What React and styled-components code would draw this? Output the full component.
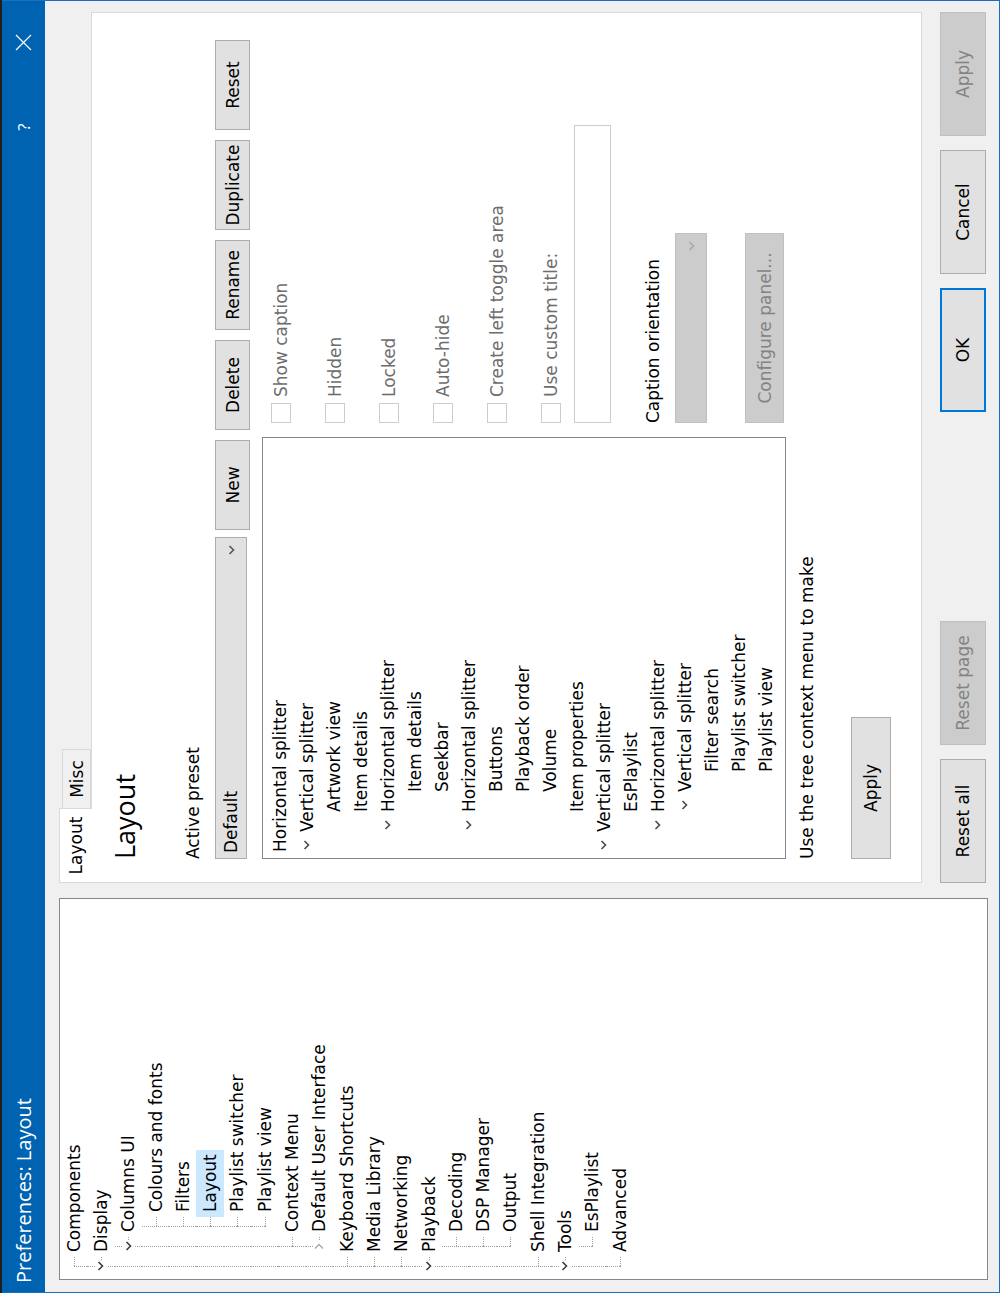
import React from "react";
import styled, { createGlobalStyle } from "styled-components";

// the dialog is drawn upright (1293 x 1000) and then turned a quarter
// anticlockwise, the way the screenshot shows it

const GlobalStyle = createGlobalStyle`
  html, body {
    margin: 0;
    padding: 0;
    background: #1f1f1f;
    overflow: hidden;
  }
  #root {
    width: 1000px;
    height: 1293px;
    overflow: hidden;
  }
  * {
    box-sizing: border-box;
  }
`;

const UI_FONT = `"DejaVu Sans", Verdana, sans-serif`;
const TITLE_FONT = `"Open Sans", "Noto Sans", sans-serif`;

const Stage = styled.div`
  width: 1293px;
  height: 1000px;
  padding-top: 2px;
  display: flex;
  transform-origin: 0 0;
  transform: translateY(1293px) rotate(-90deg);
`;

const Window = styled.div`
  flex: 1;
  display: flex;
  flex-direction: column;
  background: #f0f0f0;
  border: 1px solid #1a6fc0;
  border-top: none;
  font-family: ${UI_FONT};
  font-size: 17px;
  color: #000;
`;

const TitleBar = styled.div`
  height: 43px;
  flex: none;
  display: flex;
  align-items: center;
  background: #0063b1;
  color: #fff;
  padding-left: 9px;
  padding-right: 19px;
`;

const Title = styled.div`
  font-family: ${TITLE_FONT};
  font-size: 20px;
  flex: 1;
`;

const CaptionButton = styled.div`
  width: 46px;
  height: 100%;
  display: flex;
  align-items: center;
  justify-content: center;
  margin-left: ${(p) => p.$gap || 0}px;
  font-family: ${TITLE_FONT};
  font-size: 17px;
`;

const Body = styled.div`
  flex: 1;
  display: flex;
  gap: 15px;
  padding: 14px 11px 11px 12px;
  min-height: 0;
`;

/* ---------- left navigation tree ---------- */

const NavTree = styled.div`
  width: 382px;
  flex: none;
  background: #fff;
  border: 1px solid #828790;
  padding: 0 0 0 2px;
  overflow: hidden;
`;

const NavRow = styled.div`
  height: 27.3px;
  display: flex;
  align-items: stretch;
  white-space: nowrap;
`;

const Guide = styled.span`
  width: 20px;
  flex: none;
  position: relative;
  &::before {
    content: "";
    display: ${(p) => (p.$on ? "block" : "none")};
    position: absolute;
    left: 10px;
    top: 0;
    bottom: 0;
    border-left: 1px dotted #a0a0a0;
  }
`;

const Joint = styled.span`
  width: 20px;
  flex: none;
  position: relative;
  display: flex;
  align-items: center;
  justify-content: center;
  &::before {
    content: "";
    position: absolute;
    left: 10px;
    top: ${(p) => (p.$first ? "50%" : "0")};
    bottom: ${(p) => (p.$last ? "50%" : "0")};
    border-left: 1px dotted #a0a0a0;
  }
  &::after {
    content: "";
    position: absolute;
    left: 10px;
    right: 0;
    top: 50%;
    border-top: 1px dotted #a0a0a0;
  }
`;

const Expander = styled.span`
  position: relative;
  z-index: 1;
  width: 12px;
  height: 12px;
  background: #fff;
  display: flex;
  align-items: center;
  justify-content: center;
  margin-left: 1px;
`;

const NavLabel = styled.span`
  display: flex;
  align-items: center;
  padding: 0 4px 0 5px;
  background: ${(p) => (p.$selected ? "#cce8ff" : "transparent")};
`;

/* ---------- right side ---------- */

const RightColumn = styled.div`
  flex: 1;
  display: flex;
  flex-direction: column;
  min-width: 0;
`;

const Tabs = styled.div`
  height: 32px;
  flex: none;
  display: flex;
  align-items: flex-end;
`;

const Tab = styled.div`
  position: relative;
  z-index: ${(p) => (p.$active ? 1 : 0)};
  width: ${(p) => p.$w}px;
  height: ${(p) => (p.$active ? 33 : 29)}px;
  margin-bottom: ${(p) => (p.$active ? -1 : 0)}px;
  background: ${(p) => (p.$active ? "#fff" : "#f0f0f0")};
  border: 1px solid #d9d9d9;
  border-bottom: ${(p) => (p.$active ? "none" : "1px solid #d9d9d9")};
  border-left: ${(p) => (p.$active ? "1px solid #d9d9d9" : "none")};
  display: flex;
  align-items: center;
  justify-content: center;
`;

const Page = styled.div`
  flex: 1;
  background: #fff;
  border: 1px solid #d9d9d9;
  padding: 15px 0 0 23px;
  display: flex;
  flex-direction: column;
  align-items: flex-start;
`;

const Heading = styled.div`
  font-family: ${TITLE_FONT};
  font-size: 27px;
  line-height: 36px;
`;

const Label = styled.div`
  line-height: 20px;
  margin-top: ${(p) => p.$mt || 0}px;
  color: ${(p) => (p.$muted ? "#6d6d6d" : "#000")};
  white-space: nowrap;
`;

const PresetRow = styled.div`
  display: flex;
  align-items: flex-start;
  margin-top: 12px;
`;

const Combo = styled.div`
  width: ${(p) => p.$w}px;
  height: 32px;
  margin-top: ${(p) => p.$mt || 0}px;
  display: flex;
  align-items: center;
  justify-content: space-between;
  padding: 0 7px 0 5px;
  background: ${(p) => (p.$disabled ? "#cccccc" : "#e1e1e1")};
  border: 1px solid ${(p) => (p.$disabled ? "#bfbfbf" : "#adadad")};
`;

const ButtonGroup = styled.div`
  display: flex;
  gap: 10px;
  margin-left: 7px;
`;

const Button = styled.div`
  width: ${(p) => p.$w}px;
  height: ${(p) => p.$h}px;
  margin-top: ${(p) => p.$mt || 0}px;
  flex: none;
  display: flex;
  align-items: center;
  justify-content: center;
  white-space: nowrap;
  background: ${(p) => (p.$disabled ? "#cccccc" : "#e1e1e1")};
  color: ${(p) => (p.$disabled ? "#838383" : "#000")};
  border: ${(p) =>
    p.$focus
      ? "2px solid #0078d7"
      : `1px solid ${p.$disabled ? "#bfbfbf" : "#adadad"}`};
`;

const MainRow = styled.div`
  display: flex;
  align-items: flex-start;
  gap: 14px;
  margin-top: 12px;
`;

const LayoutTree = styled.div`
  width: 422px;
  height: 524px;
  border: 1px solid #828790;
  padding-top: 3px;
`;

const LayoutRow = styled.div`
  height: 27px;
  display: flex;
  align-items: center;
  padding-left: ${(p) => 6 + p.$depth * 20}px;
  white-space: nowrap;
`;

const RowChevron = styled.span`
  width: 10px;
  margin-left: -18px;
  margin-right: 8px;
  display: flex;
  justify-content: center;
`;

const Settings = styled.div`
  display: flex;
  flex-direction: column;
  align-items: flex-start;
  padding-top: 9px;
`;

const CheckList = styled.div`
  display: flex;
  flex-direction: column;
  gap: 34px;
`;

const CheckRow = styled.div`
  height: 20px;
  display: flex;
  align-items: center;
  gap: 6px;
`;

const CheckBox = styled.span`
  width: 20px;
  height: 20px;
  flex: none;
  border: 1px solid #cccccc;
  background: #fff;
`;

const TextBox = styled.div`
  width: 298px;
  height: 37px;
  margin-top: 13px;
  border: 1px solid #cccccc;
  background: #fff;
`;

const ButtonBar = styled.div`
  height: 46px;
  flex: none;
  display: flex;
  gap: 14px;
  margin: 18px 0 2px;
`;

const Spacer = styled.div`
  flex: 1;
`;

const Chevron = ({ open = true, color = "#404040" }) =>
  open ? (
    <svg width="10" height="7" viewBox="0 0 10 7">
      <polyline
        points="1,1.5 5,5.5 9,1.5"
        fill="none"
        stroke={color}
        strokeWidth="1.6"
      />
    </svg>
  ) : (
    <svg width="7" height="10" viewBox="0 0 7 10">
      <polyline
        points="1.5,1 5.5,5 1.5,9"
        fill="none"
        stroke={color}
        strokeWidth="1.4"
      />
    </svg>
  );

const navItems = [
  { label: "Components", guides: "", first: true },
  { label: "Display", guides: "", exp: "open" },
  { label: "Columns UI", guides: "1", exp: "open" },
  { label: "Colours and fonts", guides: "11" },
  { label: "Filters", guides: "11" },
  { label: "Layout", guides: "11", selected: true },
  { label: "Playlist switcher", guides: "11" },
  { label: "Playlist view", guides: "11", last: true },
  { label: "Context Menu", guides: "1" },
  { label: "Default User Interface", guides: "1", exp: "closed", last: true },
  { label: "Keyboard Shortcuts", guides: "" },
  { label: "Media Library", guides: "" },
  { label: "Networking", guides: "" },
  { label: "Playback", guides: "", exp: "open" },
  { label: "Decoding", guides: "1" },
  { label: "DSP Manager", guides: "1" },
  { label: "Output", guides: "1", last: true },
  { label: "Shell Integration", guides: "" },
  { label: "Tools", guides: "", exp: "open" },
  { label: "EsPlaylist", guides: "1", last: true },
  { label: "Advanced", guides: "", last: true },
];

const layoutItems = [
  ["Horizontal splitter", 0],
  ["Vertical splitter", 1, true],
  ["Artwork view", 2],
  ["Item details", 2],
  ["Horizontal splitter", 2, true],
  ["Item details", 3],
  ["Seekbar", 3],
  ["Horizontal splitter", 2, true],
  ["Buttons", 3],
  ["Playback order", 3],
  ["Volume", 3],
  ["Item properties", 2],
  ["Vertical splitter", 1, true],
  ["EsPlaylist", 2],
  ["Horizontal splitter", 2, true],
  ["Vertical splitter", 3, true],
  ["Filter search", 4],
  ["Playlist switcher", 4],
  ["Playlist view", 4],
];

const checks = [
  "Show caption",
  "Hidden",
  "Locked",
  "Auto-hide",
  "Create left toggle area",
  "Use custom title:",
];

export default function App() {
  return (
    <>
      <GlobalStyle />
      <Stage>
        <Window>
          <TitleBar>
            <Title>Preferences: Layout</Title>
            <CaptionButton>?</CaptionButton>
            <CaptionButton $gap={38}>
              <svg width="17" height="17" viewBox="0 0 17 17">
                <path d="M1 1 L16 16 M16 1 L1 16" stroke="#fff" strokeWidth="1.2" />
              </svg>
            </CaptionButton>
          </TitleBar>

          <Body>
            <NavTree>
              {navItems.map((item, i) => (
                <NavRow key={i}>
                  {item.guides.split("").map((g, j) => (
                    <Guide key={j} $on={g === "1"} />
                  ))}
                  <Joint $first={item.first} $last={item.last}>
                    {item.exp && (
                      <Expander>
                        {item.exp === "open" ? (
                          <Chevron open color="#3c3c3c" />
                        ) : (
                          <Chevron open={false} color="#a6a6a6" />
                        )}
                      </Expander>
                    )}
                  </Joint>
                  <NavLabel $selected={item.selected}>{item.label}</NavLabel>
                </NavRow>
              ))}
            </NavTree>

            <RightColumn>
              <Tabs>
                <Tab $active $w={75}>Layout</Tab>
                <Tab $w={59}>Misc</Tab>
              </Tabs>
              <Page>
                <Heading>Layout</Heading>
                <Label $mt={40}>Active preset</Label>
                <PresetRow>
                  <Combo $w={322}>
                    <span>Default</span>
                    <Chevron open color="#555" />
                  </Combo>
                  <ButtonGroup>
                    {["New", "Delete", "Rename", "Duplicate", "Reset"].map((b) => (
                      <Button key={b} $w={90} $h={35}>
                        {b}
                      </Button>
                    ))}
                  </ButtonGroup>
                </PresetRow>

                <MainRow>
                  <LayoutTree>
                    {layoutItems.map(([label, depth, open], i) => (
                      <LayoutRow key={i} $depth={depth}>
                        {open && (
                          <RowChevron>
                            <Chevron open color="#4a4a4a" />
                          </RowChevron>
                        )}
                        {label}
                      </LayoutRow>
                    ))}
                  </LayoutTree>

                  <Settings>
                    <CheckList>
                      {checks.map((c) => (
                        <CheckRow key={c}>
                          <CheckBox />
                          <Label $muted>{c}</Label>
                        </CheckRow>
                      ))}
                    </CheckList>
                    <TextBox />
                    <Label $mt={32}>Caption orientation</Label>
                    <Combo $w={190} $mt={12} $disabled>
                      <span />
                      <Chevron open color="#a8a8a8" />
                    </Combo>
                    <Button $w={190} $h={39} $mt={38} $disabled>
                      Configure panel...
                    </Button>
                  </Settings>
                </MainRow>

                <Label $mt={11}>Use the tree context menu to make</Label>
                <Button $w={142} $h={40} $mt={34}>
                  Apply
                </Button>
              </Page>

              <ButtonBar>
                <Button $w={124} $h={46}>Reset all</Button>
                <Button $w={124} $h={46} $disabled>Reset page</Button>
                <Spacer />
                <Button $w={124} $h={46} $focus>OK</Button>
                <Button $w={124} $h={46}>Cancel</Button>
                <Button $w={124} $h={46} $disabled>Apply</Button>
              </ButtonBar>
            </RightColumn>
          </Body>
        </Window>
      </Stage>
    </>
  );
}
